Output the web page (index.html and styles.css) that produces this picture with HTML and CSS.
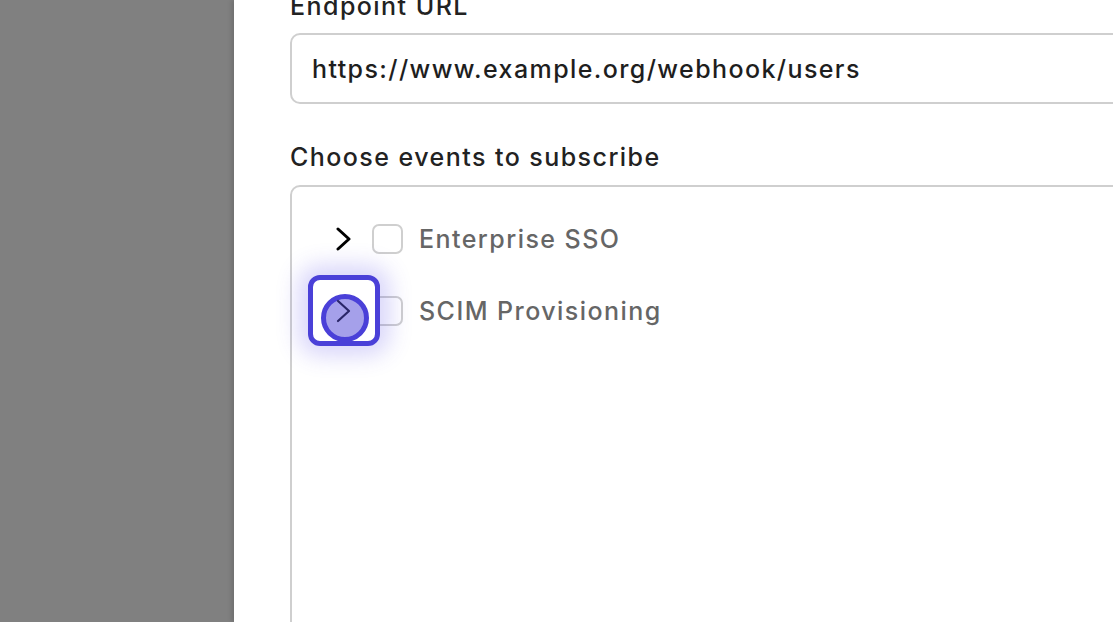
FILE: index.html
```html
<!DOCTYPE html>
<html>
<head>
<meta charset="utf-8">
<link rel="stylesheet" href="styles.css">
</head>
<body>
<div class="page">
  <div class="backdrop"></div>
  <div class="panel">
    <div class="content">
      <label class="label label-top">Endpoint URL</label>
      <div class="input">https://www.example.org/webhook/users</div>
      <label class="label label-events">Choose events to subscribe</label>
      <div class="events">
        <div class="row">
          <button class="toggle">
            <svg width="20" height="24" viewBox="0 0 20 24"><path d="M4 2 L15 12 L4 22" fill="none" stroke="#000" stroke-width="3" stroke-linecap="round" stroke-linejoin="round"/></svg>
          </button>
          <span class="checkbox"></span>
          <span class="name">Enterprise SSO</span>
        </div>
        <div class="row">
          <button class="toggle focused">
            <span class="ring"><span class="dot"></span></span>
            <svg class="chev-focus" width="20" height="24" viewBox="0 0 20 24"><path d="M4 2 L15 12 L4 22" fill="none" stroke="#2a2668" stroke-width="2.2" stroke-linecap="round" stroke-linejoin="round"/></svg>
          </button>
          <span class="checkbox"></span>
          <span class="name">SCIM Provisioning</span>
        </div>
      </div>
    </div>
  </div>
</div>
</body>
</html>
```

FILE: styles.css
```css
* { box-sizing: border-box; }
html, body { margin: 0; padding: 0; height: 100%; overflow: hidden; }
body { font-family: Inter, "Noto Sans", sans-serif; background: #fff; }

.page { display: flex; height: 622px; }
.backdrop { width: 234px; flex: none; background: #808080; }
.panel {
  flex: 1;
  background: #fff;
  box-shadow: -3px 0 4px rgba(0,0,0,0.12);
  overflow: hidden;
  position: relative;
}
.content { padding-left: 56px; margin-top: -12px; width: 1000px; }

.label { display: block; font-size: 25px; font-weight: 500; letter-spacing: 1.45px; line-height: 36px; color: #222; }
.label-top { margin-bottom: 9px; }
.input {
  height: 71px;
  border: 2px solid #cfcfcf;
  border-radius: 10px;
  padding-left: 20px;
  display: flex;
  align-items: center;
  font-size: 25px;
  font-weight: 500;
  letter-spacing: 1.4px;
  color: #1e1e1e;
}
.label-events { margin-top: 35px; margin-bottom: 10px; }

.events {
  border: 2px solid #cfcfcf;
  border-radius: 10px;
  height: 520px;
  padding-top: 16px;
}
.row { display: flex; align-items: center; height: 72px; padding-left: 32px; }
.toggle {
  width: 40px; height: 40px; flex: none;
  border: 0; background: transparent; padding: 0;
  display: flex; align-items: center; justify-content: center;
  position: relative;
}
.toggle svg { position: relative; z-index: 2; }
.ring {
  position: absolute;
  left: -16px; right: -16px; top: -16px; bottom: -15px;
  border: 5px solid #4a40d8;
  border-radius: 12px;
  background: #fff;
  overflow: hidden;
  box-shadow: 0 0 22px 10px rgba(80,70,230,0.22);
  z-index: 1;
}
.dot {
  position: absolute;
  left: 8px; top: 14px;
  width: 48px; height: 48px;
  border-radius: 50%;
  border: 5px solid #4a40d8;
  background: #a5a0ea;
}
.checkbox {
  width: 31px; height: 30px; flex: none;
  border: 2px solid #cfcfcf;
  border-radius: 7px;
  margin-left: 8px;
  background: #fff;
}
.name { margin-left: 16px; font-size: 25px; font-weight: 500; letter-spacing: 1.45px; color: #666; }
```
